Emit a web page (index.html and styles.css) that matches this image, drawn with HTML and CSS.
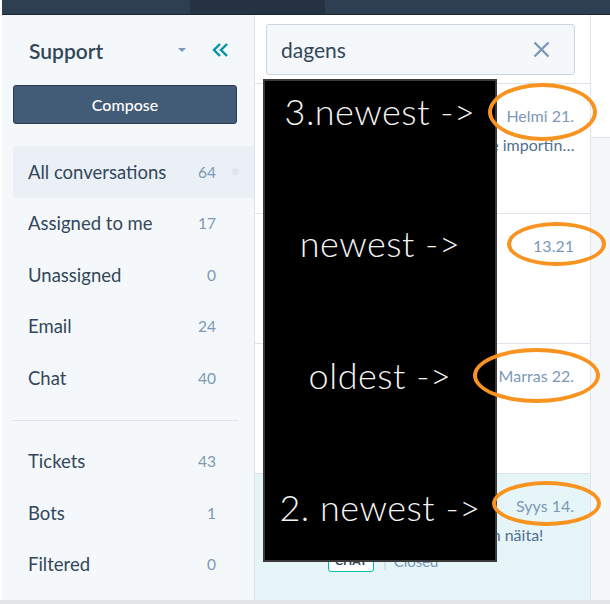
FILE: index.html
```html
<!DOCTYPE html>
<html lang="en">
<head>
    <meta charset="UTF-8">
    <title>Conversations - Support</title>
    <link rel="stylesheet" href="styles.css">
</head>
<body>
<div class="topbar">
    <span class="topbar-seg"></span>
    <span class="topbar-seg topbar-seg-active"></span>
    <span class="topbar-seg topbar-seg-fill"></span>
</div>

<div class="app">
    <aside class="sidebar">
        <div class="inbox-head">
            <span class="inbox-name">Support</span>
            <span class="caret"></span>
            <svg class="collapse" width="19" height="14" viewBox="0 0 19 14">
                <path d="M9 1 L3 7 L9 13 M16 1 L10 7 L16 13" fill="none" stroke="#0091ae" stroke-width="2.4"/>
            </svg>
        </div>
        <button class="compose">Compose</button>

        <ul class="nav">
            <li class="nav-item active"><span class="nav-label">All conversations</span><span class="nav-count">64</span><span class="nav-dot"></span></li>
            <li class="nav-item"><span class="nav-label">Assigned to me</span><span class="nav-count">17</span><span class="nav-dot"></span></li>
            <li class="nav-item"><span class="nav-label">Unassigned</span><span class="nav-count">0</span><span class="nav-dot"></span></li>
            <li class="nav-item"><span class="nav-label">Email</span><span class="nav-count">24</span><span class="nav-dot"></span></li>
            <li class="nav-item"><span class="nav-label">Chat</span><span class="nav-count">40</span><span class="nav-dot"></span></li>
        </ul>
        <hr class="nav-divider">
        <ul class="nav">
            <li class="nav-item"><span class="nav-label">Tickets</span><span class="nav-count">43</span><span class="nav-dot"></span></li>
            <li class="nav-item"><span class="nav-label">Bots</span><span class="nav-count">1</span><span class="nav-dot"></span></li>
            <li class="nav-item"><span class="nav-label">Filtered</span><span class="nav-count">0</span><span class="nav-dot"></span></li>
        </ul>
    </aside>

    <section class="threads">
        <div class="search-wrap">
            <div class="search">
                <span class="search-text">dagens</span>
                <svg class="search-clear" width="17" height="17" viewBox="0 0 17 17">
                    <path d="M1.5 1.5 L15.5 15.5 M15.5 1.5 L1.5 15.5" stroke="#7c98b6" stroke-width="2.4" fill="none"/>
                </svg>
            </div>
        </div>
        <ul class="thread-list">
            <li class="thread">
                <div class="thread-top"><span class="thread-name">Matti Virtanen</span><span class="thread-time">Helmi 21.</span></div>
                <div class="thread-preview">Moi, dagens: tiedostoille importing ei toimi</div>
            </li>
            <li class="thread">
                <div class="thread-top"><span class="thread-name">Liisa Korhonen</span><span class="thread-time">13.21</span></div>
                <div class="thread-preview"></div>
            </li>
            <li class="thread">
                <div class="thread-top"><span class="thread-name">Jussi Nieminen</span><span class="thread-time">Marras 22.</span></div>
                <div class="thread-preview">Re: Dagens tilaus</div>
            </li>
            <li class="thread thread-selected">
                <div class="thread-top"><span class="thread-name">Anna Mäkinen</span><span class="thread-time">Syys 14.</span></div>
                <div class="thread-preview">Dagens uutiset — haluan näita!</div>
                <div class="thread-meta"><span class="tag">Chat</span><span class="meta-sep">|</span><span class="meta-status">Closed</span></div>
            </li>
        </ul>
    </section>

    <div class="detail">
        <div class="detail-head"></div>
    </div>
</div>
<div class="footer-line"></div>

<div class="note">
    <div class="note-line">3.newest -&gt;</div>
    <div class="note-line">newest -&gt;</div>
    <div class="note-line">oldest -&gt;</div>
    <div class="note-line">2. newest -&gt;</div>
</div>
<div class="ring ring-1"></div>
<div class="ring ring-2"></div>
<div class="ring ring-3"></div>
<div class="ring ring-4"></div>
</body>
</html>
```

FILE: styles.css
```css
* {
    box-sizing: border-box;
}

body {
    margin: 0;
    padding-left: 2px;
    position: relative;
    font-family: Lato, 'Open Sans', sans-serif;
    color: #33475b;
    background: #fff;
}

ul {
    list-style: none;
    margin: 0;
    padding: 0;
}

.topbar {
    display: flex;
    height: 15px;
    border-bottom: 1px solid #1b2531;
}

.topbar-seg {
    width: 188px;
    background: #2e3f51;
}

.topbar-seg-active {
    width: 135px;
    background: #253242;
}

.topbar-seg-fill {
    flex: 1;
}

.app {
    display: flex;
    height: 585px;
}

.sidebar {
    width: 253px;
    background: #f5f8fa;
    border-right: 1px solid #dfe3eb;
}

.inbox-head {
    display: flex;
    align-items: center;
    height: 30px;
    margin-top: 20px;
    padding: 0 24px 0 27px;
}

.inbox-name {
    flex: 1;
    font-size: 21px;
    font-weight: 600;
}

.caret {
    width: 0;
    height: 0;
    border-left: 4px solid transparent;
    border-right: 4px solid transparent;
    border-top: 4px solid #7c98b6;
    margin-right: 25px;
}

.compose {
    display: block;
    width: 224px;
    height: 39px;
    margin: 20px 0 0 11px;
    background: #425b76;
    border: 1px solid #2d3e50;
    border-radius: 3px;
    color: #fff;
    font-family: inherit;
    font-size: 16px;
    font-weight: 500;
}

.nav:first-of-type {
    margin-top: 22px;
}

.nav-item {
    display: flex;
    align-items: center;
    height: 51.5px;
    margin-left: 11px;
    padding: 0 15px 0 15px;
    font-size: 18.5px;
    border-radius: 3px 0 0 3px;
}

.nav-item.active {
    background: #eaf0f6;
}

.nav-label {
    flex: 1;
}

.nav-count {
    font-size: 15.5px;
    color: #7c98b6;
}

.nav-dot {
    width: 7px;
    height: 7px;
    margin-left: 16px;
    border-radius: 50%;
    visibility: hidden;
}

.nav-item.active .nav-dot {
    visibility: visible;
    background: #dfe5ec;
}

.nav-divider {
    margin: 16px 16px 15px 11px;
    border: 0;
    border-top: 1px solid #dfe3eb;
}

.threads {
    display: flex;
    flex-direction: column;
    width: 336px;
    border-right: 1px solid #dfe3eb;
}

.search-wrap {
    padding: 9px 15px 8px 11px;
    border-bottom: 1px solid #dfe3eb;
}

.search {
    display: flex;
    align-items: center;
    height: 51px;
    padding: 0 24px 0 14px;
    background: #f5f8fa;
    border: 1px solid #cbd6e2;
    border-radius: 3px;
}

.search-text {
    flex: 1;
    font-size: 21px;
}

.thread-list {
    flex: 1;
    display: flex;
    flex-direction: column;
}

.thread {
    height: 130px;
    padding: 22px 16px 0 73px;
    border-bottom: 1px solid #dfe3eb;
}

.thread-selected {
    flex: 1;
    border-bottom: 0;
    background: #e5f5f8;
}

.thread-top {
    display: flex;
    justify-content: space-between;
    line-height: 20px;
}

.thread-name {
    font-size: 16px;
    font-weight: 700;
}

.thread-time {
    font-size: 16px;
    color: #7c98b6;
}

.thread-preview {
    margin: 9px -8px 0 0;
    font-size: 16px;
    line-height: 20px;
    color: #516f90;
    white-space: nowrap;
    overflow: hidden;
    text-overflow: ellipsis;
}

.thread-meta {
    display: flex;
    align-items: center;
    margin-top: 4px;
    font-size: 15px;
    color: #7c98b6;
}

.tag {
    display: inline-block;
    padding: 3px 6px;
    border: 1px solid #00bda5;
    border-radius: 3px;
    background: #fff;
    color: #33475b;
    font-size: 12px;
    font-weight: 700;
    text-transform: uppercase;
}

.meta-sep {
    margin: 0 7px 0 9px;
    color: #cbd6e2;
}

.detail {
    flex: 1;
    background: #f5f8fa;
}

.detail-head {
    height: 123px;
    background: #fff;
    border-bottom: 1px solid #dfe3eb;
}

.footer-line {
    height: 4px;
    margin-left: -2px;
    background: #e3e4e6;
}

/* annotation drawn on top of the screenshot */
.note {
    position: absolute;
    left: 263px;
    top: 79px;
    width: 234px;
    height: 483px;
    background: #000;
    border: 2px solid #3a3a3a;
    display: flex;
    flex-direction: column;
    gap: 66px;
}

.note-line {
    height: 66px;
    line-height: 60px;
    text-align: center;
    color: #f4f4f4;
    font-family: Lato, sans-serif;
    font-size: 36px;
    font-weight: 300;
    letter-spacing: 0.5px;
}

.ring {
    position: absolute;
    border: 4px solid #f7931e;
    border-radius: 50%;
}

.ring-1 { left: 488px; top: 83px; width: 109px; height: 58px; }
.ring-2 { left: 507px; top: 222px; width: 99px; height: 44px; }
.ring-3 { left: 473px; top: 348px; width: 127px; height: 55px; }
.ring-4 { left: 492px; top: 481px; width: 109px; height: 45px; }
```
